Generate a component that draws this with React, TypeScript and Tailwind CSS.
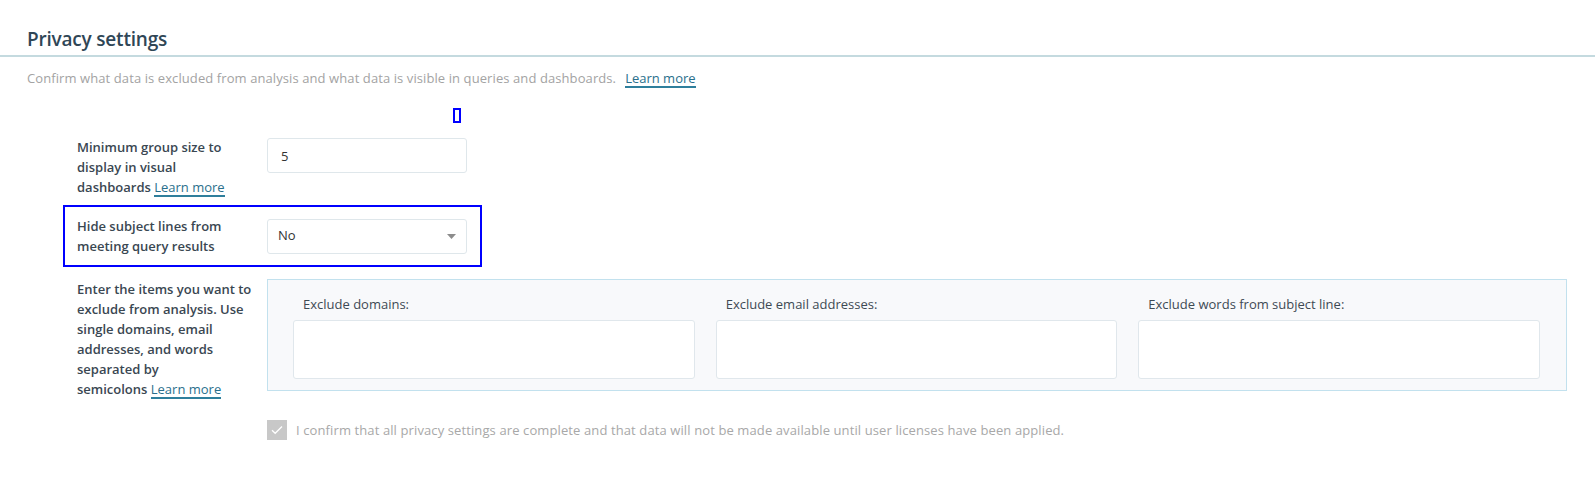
import React from "react";

const LearnMore = ({ className = "" }: { className?: string }) => (
  <span className={`inline-block leading-[16px] font-normal text-[#2a6f8c] border-b-2 border-[#2f7f9c] ${className}`}>
    Learn more
  </span>
);

const ExcludeField = ({ label }: { label: string }) => (
  <div className="flex flex-col">
    <label className="pl-[10px] text-[13px] leading-5 text-[#3e4a54]">{label}</label>
    <textarea
      className="mt-[6px] h-[59px] w-full resize-none rounded-[3px] border border-[#e0e7ec] bg-white outline-none"
      defaultValue=""
    />
  </div>
);

export default function App() {
  return (
    <div className="min-h-[488px] bg-white pt-[26px] font-['Open_Sans',sans-serif]">
      <div className="border-b-2 border-[#c4dadf] pl-[27px] pb-[3px]">
        <h1 className="text-[19px] leading-[26px] font-semibold tracking-[-0.2px] text-[#2f4656]">
          Privacy settings
        </h1>
      </div>

      <p className="mt-[11px] pl-[27px] text-[13px] leading-5 tracking-[0.09px] text-[#a3a3a3]">
        Confirm what data is excluded from analysis and what data is visible in queries and dashboards.
        <LearnMore className="ml-[9px] tracking-normal" />
      </p>

      <div className="pl-[63px]">
        <div className="mt-[20px] ml-[390px] h-[15px] w-[8px] border-2 border-[#0000ff]" />

        {/* min group size */}
        <div className="flex items-start border-2 border-transparent px-[12px] pt-[13px] pb-[6px]">
          <div className="mt-[-1px] w-[175px] shrink-0 text-[13px] leading-5 font-semibold text-[#3a4752]">
            Minimum group size to display in visual dashboards <LearnMore />
          </div>
          <input
            readOnly
            value="5"
            className="ml-[15px] h-[35px] w-[200px] rounded-[3px] border border-[#dfe7eb] bg-white pl-[13px] text-[13px] text-[#333] outline-none"
          />
        </div>

        {/* hide subject lines */}
        <div className="flex w-[419px] items-center border-2 border-[#0000ff] px-[12px] py-[9px]">
          <div className="w-[175px] shrink-0 text-[13px] leading-5 font-semibold text-[#3a4752]">
            Hide subject lines from meeting query results
          </div>
          <div className="ml-[15px] flex h-[35px] w-[200px] items-center justify-between rounded-[3px] border border-[#dfe7eb] bg-white pr-[10px] pl-[10px] text-[13px] text-[#333]">
            <span>No</span>
            <svg width="9" height="5" viewBox="0 0 9 5">
              <polygon points="0,0 9,0 4.5,5" fill="#8c8c8c" />
            </svg>
          </div>
        </div>

        {/* exclusions */}
        <div className="flex items-start border-2 border-b-0 border-transparent px-[12px] pt-[10px]">
          <div className="w-[175px] shrink-0 text-[13px] leading-5 font-semibold text-[#3a4752]">
            Enter the items you want to exclude from analysis. Use single domains, email addresses, and words separated by
            <br />
            semicolons <LearnMore />
          </div>
          <div className="mr-[14px] ml-[15px] grid h-[112px] flex-1 grid-cols-3 gap-[21px] border border-[#c2e1ee] bg-[#f8f9fb] pt-[14px] pr-[26px] pl-[25px]">
            <ExcludeField label="Exclude domains:" />
            <ExcludeField label="Exclude email addresses:" />
            <ExcludeField label="Exclude words from subject line:" />
          </div>
        </div>

        <div className="mt-[21px] ml-[204px] flex items-center gap-[9px]">
          <div className="flex h-[20px] w-[20px] items-center justify-center bg-[#c8c8c8]">
            <svg width="12" height="10" viewBox="0 0 12 10" fill="none">
              <path d="M1 5.2 L4.2 8.3 L11 1.5" stroke="#ffffff" strokeWidth="1.3" />
            </svg>
          </div>
          <span className="text-[13px] leading-5 tracking-[0.11px] text-[#a8a8a8]">
            I confirm that all privacy settings are complete and that data will not be made available until user licenses have been applied.
          </span>
        </div>
      </div>
    </div>
  );
}
